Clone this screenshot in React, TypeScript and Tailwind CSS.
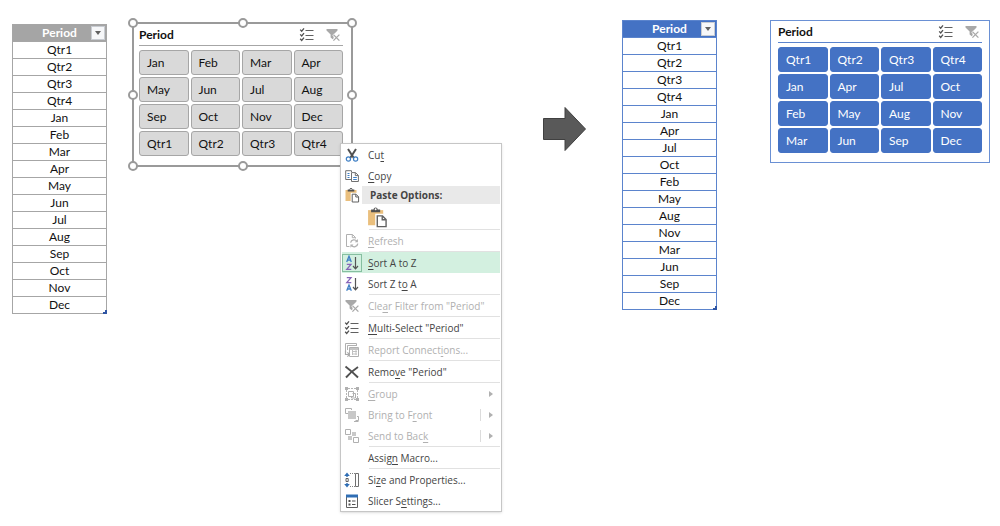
import React from 'react';
import clsx from 'clsx';

const tableBefore = ['Qtr1', 'Qtr2', 'Qtr3', 'Qtr4', 'Jan', 'Feb', 'Mar', 'Apr', 'May', 'Jun', 'Jul', 'Aug', 'Sep', 'Oct', 'Nov', 'Dec'];
const tableAfter = ['Qtr1', 'Qtr2', 'Qtr3', 'Qtr4', 'Jan', 'Apr', 'Jul', 'Oct', 'Feb', 'May', 'Aug', 'Nov', 'Mar', 'Jun', 'Sep', 'Dec'];
const slicerBefore = ['Jan', 'Feb', 'Mar', 'Apr', 'May', 'Jun', 'Jul', 'Aug', 'Sep', 'Oct', 'Nov', 'Dec', 'Qtr1', 'Qtr2', 'Qtr3', 'Qtr4'];
const slicerAfter = ['Qtr1', 'Qtr2', 'Qtr3', 'Qtr4', 'Jan', 'Apr', 'Jul', 'Oct', 'Feb', 'May', 'Aug', 'Nov', 'Mar', 'Jun', 'Sep', 'Dec'];

type Tone = 'gray' | 'blue';

function Svg({ children, className = 'size-4' }: { children: React.ReactNode; className?: string }) {
  return (
    <svg viewBox="0 0 16 16" fill="none" className={className} aria-hidden="true">
      {children}
    </svg>
  );
}

const CutIcon = () => (
  <Svg>
    <path d="M4 2L9.8 11M12 2L6.2 11" stroke="#505050" strokeWidth="2" />
    <circle cx="4.4" cy="12" r="2.1" stroke="#3f7fc4" strokeWidth="1.2" />
    <circle cx="11.6" cy="12" r="2.1" stroke="#3f7fc4" strokeWidth="1.2" />
  </Svg>
);

const CopyIcon = () => (
  <Svg>
    <path d="M7 11.5H1.7V2.7H7.5V4" stroke="#707070" />
    <path d="M3.5 5.5H5.5M3.5 7.5H5.5M3.5 9.5H5.5" stroke="#3f7fc4" />
    <path d="M7.5 4.6H11.5L14.4 7.4V13.5H7.5Z" fill="#fff" stroke="#707070" />
    <path d="M11.3 4.8V7.6H14.2" stroke="#707070" />
    <path d="M9.2 9.5H12.8M9.2 11.5H12.8" stroke="#3f7fc4" />
  </Svg>
);

const PasteIcon = ({ className }: { className?: string }) => (
  <Svg className={className}>
    <path d="M1.5 3H12.5V14H1.5Z" fill="#eabf7d" />
    <path d="M3.7 4.6V2.6H5.5C5.5 .5 8.5 .5 8.5 2.6H10.3V4.6Z" fill="#505050" />
    <circle cx="7" cy="2.4" r=".7" fill="#fff" />
    <path d="M7.8 6.8H12L14.9 9.6V15.2H7.8Z" fill="#fff" stroke="#fff" strokeWidth="2.2" />
    <path d="M8.2 7.2H12L14.6 9.8V15H8.2Z" fill="#fff" stroke="#606060" />
    <path d="M11.8 7.4V10H14.4" stroke="#606060" />
  </Svg>
);

const RefreshIcon = () => (
  <Svg>
    <path d="M5.5 13.5H2.5V1.5H8.5L11.5 4.5V5.5M8.3 1.7V4.7H11.3" stroke="#b0b0b0" />
    <path d="M6.6 9.6A3.6 3.6 0 0 1 13 8.3M13.8 10.6A3.6 3.6 0 0 1 7.4 12.4" stroke="#b0b0b0" strokeWidth="1.3" />
    <path d="M13.9 6V9.2H10.8ZM6.4 14.8V11.6H9.5Z" fill="#b0b0b0" />
  </Svg>
);

const SortAIcon = () => (
  <Svg>
    <path d="M2.7 7L5 1.2L7.3 7M3.5 5.2H6.5" stroke="#3f7fc4" strokeWidth="1.3" />
    <path d="M2.8 9.4H7L2.8 14.4H7.3" stroke="#8764b8" strokeWidth="1.3" />
    <path d="M11.5 2V13.5M9 11L11.5 13.8L14 11" stroke="#555" strokeWidth="1.2" />
  </Svg>
);

const SortZIcon = () => (
  <Svg>
    <path d="M2.8 1.6H7L2.8 6.6H7.3" stroke="#8764b8" strokeWidth="1.3" />
    <path d="M2.7 14.8L5 9L7.3 14.8M3.5 13H6.5" stroke="#3f7fc4" strokeWidth="1.3" />
    <path d="M11.5 2V13.5M9 11L11.5 13.8L14 11" stroke="#555" strokeWidth="1.2" />
  </Svg>
);

const ClearFilterIcon = () => (
  <Svg>
    <path d="M1.5 2H12.5V3.6L8.6 7.6V13L5.6 10.6V7.6L1.5 3.6Z" fill="#a8a8a8" />
    <path d="M8.2 7.4L14.5 13.7M14.5 7.4L8.2 13.7" stroke="#fff" strokeWidth="2.6" />
    <path d="M8.4 7.6L14.4 13.6M14.4 7.6L8.4 13.6" stroke="#a8a8a8" strokeWidth="1.3" />
  </Svg>
);

const MultiSelectIcon = () => (
  <Svg>
    <path d="M6.5 3.5H14.5M6.5 8.5H14.5M6.5 12.5H14.5" stroke="#606060" />
    <path d="M1.2 2.6L2.7 4.2L5 1.4M1.2 7.4L2.7 9L5 6.2M1.2 11.8L2.7 13.4L5 10.6" stroke="#505050" strokeWidth="1.3" />
  </Svg>
);

const ReportIcon = () => (
  <Svg>
    <path d="M1.5 10V1.5H12.5V4M3.5 8V3.5H12" stroke="#b0b0b0" />
    <path d="M5.5 5.5H14.5V14.5H5.5Z" fill="#fff" stroke="#b0b0b0" />
    <path d="M5.5 7H14.5" stroke="#b0b0b0" strokeWidth="1.5" />
    <path d="M8 9.5H13M8 12H13M8.5 8V13M12 8V13" stroke="#c0c0c0" />
    <path d="M1.5 8.5V12.5H5M3.4 10.4L5.5 12.5L3.4 14.6" stroke="#a8a8a8" strokeWidth="1.2" />
  </Svg>
);

const RemoveIcon = () => (
  <Svg>
    <path d="M1.5 2.5C6 6 10 9.5 14 13.5" stroke="#505050" strokeWidth="1.9" />
    <path d="M14 3C9.5 6 5.5 9.5 2 13.5" stroke="#505050" strokeWidth="1.9" />
  </Svg>
);

const GroupIcon = () => (
  <Svg>
    <path d="M4 2.5H12M4 13.5H12M2.5 4V12M13.5 4V12" stroke="#b4b4b4" strokeDasharray="2 1" />
    <path d="M1 1H4V4H1ZM12 1H15V4H12ZM1 12H4V15H1ZM12 12H15V15H12Z" fill="#b0b0b0" />
    <path d="M4.5 5.5H9.5V10.5H4.5ZM8.5 7.5H11.5V12H7.5V10.5" stroke="#b0b0b0" />
  </Svg>
);

const FrontIcon = () => (
  <Svg>
    <path d="M4 6.5H1.5V1.5H7.5V3M11.5 13.5H14.5V9.5H13M10 14.5H14.5" stroke="#b0b0b0" />
    <path d="M4 4H12V12H4Z" fill="#c8c8c8" />
  </Svg>
);

const BackIcon = () => (
  <Svg>
    <path d="M8 4H12V8H8ZM4 8H8V12H4Z" fill="#c8c8c8" />
    <path d="M1.5 1.5H6.5V6.5H1.5ZM9.5 9.5H14.5V14.5H9.5Z" fill="#fff" stroke="#b0b0b0" />
  </Svg>
);

const SizeIcon = () => (
  <Svg>
    <path d="M3 .5L5.8 4H.2ZM3 15.5L.2 12H5.8Z" fill="#2f6eb5" />
    <path d="M3 3V5M3 11V13" stroke="#2f6eb5" strokeWidth="1.4" />
    <path d="M2 6.5H4.2V9.5H2Z" stroke="#606060" />
    <path d="M6 1.5H11M6 14.5H11" stroke="#808080" strokeDasharray="1 1" />
    <path d="M11.5 1.5H14.5V14.5H11.5Z" stroke="#707070" />
  </Svg>
);

const SettingsIcon = () => (
  <Svg>
    <path d="M2.5 2.5H13.5V14.5H2.5Z" fill="#fff" stroke="#606060" />
    <path d="M2 1.5H14V4.5H2Z" fill="#2f6eb5" />
    <path d="M4.5 7H6.5V9H4.5ZM4.5 10.5H6.5V12.5H4.5Z" fill="#505050" />
    <path d="M8 8H11.5M8 11.5H11.5" stroke="#505050" />
  </Svg>
);

function PeriodTable({ rows, tone }: { rows: string[]; tone: Tone }) {
  const line = tone === 'gray' ? 'border-[#a6a6a6]' : 'border-[#5b84cd]';
  return (
    <div className="relative w-[95px] shrink-0">
      <table className={clsx('w-full table-fixed border-collapse border text-center text-xs leading-4 text-[#111]', line)}>
        <thead>
          <tr className="h-[17px]">
            <th className={clsx('relative p-0 font-bold text-white', tone === 'gray' ? 'bg-[#a5a5a5]' : 'bg-[#4472c4]')}>
              Period
              <button
                type="button"
                aria-label="Filter Period"
                className="absolute top-px right-px flex size-[14px] items-center justify-center border border-[#c8ccd2] bg-[#f6f7f9]"
              >
                <svg viewBox="0 0 6 4" className="h-1 w-1.5" aria-hidden="true">
                  <path d="M0 0H6L3 4Z" fill="#606060" />
                </svg>
              </button>
            </th>
          </tr>
        </thead>
        <tbody>
          {rows.map((row) => (
            <tr key={row} className="h-[17px]">
              <td className={clsx('border p-0', line)}>{row}</td>
            </tr>
          ))}
        </tbody>
      </table>
      <svg viewBox="0 0 4 4" className="absolute right-0 bottom-0 size-1" aria-hidden="true">
        <path d="M4 0V4H0V2H2V0Z" fill="#2f55a4" />
      </svg>
    </div>
  );
}

function Slicer({ items, tone }: { items: string[]; tone: Tone }) {
  return (
    <section
      className={clsx(
        'pb-[9px]',
        tone === 'gray' ? 'border-2 border-[#9a9a9a] pr-2 pl-[5px]' : 'border border-[#6a90d4] px-[7px]'
      )}
    >
      <header
        className={clsx(
          'mb-1 flex h-[22px] items-center border-b text-[#111]',
          tone === 'gray' ? 'border-[#a6a6a6]' : 'border-[#5b84cd]'
        )}
      >
        <h2 className="flex-1 text-xs leading-4 font-bold">Period</h2>
        <div className="flex gap-2.5 pr-0.5">
          <button type="button" aria-label="Multi-Select"><MultiSelectIcon /></button>
          <button type="button" aria-label="Clear Filter"><ClearFilterIcon /></button>
        </div>
      </header>
      <div className="grid grid-cols-4 gap-0.5">
        {items.map((item) => (
          <button
            key={item}
            type="button"
            className={clsx(
              'h-[25px] rounded-[3px] border pl-[7px] text-left text-xs leading-4',
              tone === 'gray' ? 'border-[#a6a6a6] bg-[#d9d9d9] text-[#111]' : 'border-[#4472c4] bg-[#4472c4] text-white'
            )}
          >
            {item}
          </button>
        ))}
      </div>
    </section>
  );
}

const handles = [
  'left-0 top-0', 'left-1/2 top-0', 'left-full top-0',
  'left-0 top-1/2', 'left-full top-1/2',
  'left-0 top-full', 'left-1/2 top-full', 'left-full top-full',
];

function SelectionHandles() {
  return (
    <div className="pointer-events-none absolute inset-px">
      {handles.map((place) => (
        <span
          key={place}
          className={clsx('absolute size-2.5 -translate-x-1/2 -translate-y-1/2 rounded-full border-2 border-[#9a9a9a] bg-white', place)}
        />
      ))}
    </div>
  );
}

// "&" marks the access key letter, which is underlined
function Mnemonic({ text }: { text: string }) {
  const at = text.indexOf('&');
  if (at < 0) return <>{text}</>;
  return (
    <>
      {text.slice(0, at)}
      <u className="underline-offset-2">{text[at + 1]}</u>
      {text.slice(at + 2)}
    </>
  );
}

interface ItemProps {
  label: string;
  icon?: React.ReactNode;
  disabled?: boolean;
  active?: boolean;
  arrow?: boolean;
  split?: boolean;
}

function MenuItem({ label, icon, disabled, active, arrow, split }: ItemProps) {
  return (
    <button
      type="button"
      role="menuitem"
      disabled={disabled}
      className={clsx(
        'flex h-[21px] w-full items-center text-left',
        active && 'bg-[#d3f0e0]',
        disabled ? 'text-[#b0b0b0]' : 'text-[#444]'
      )}
    >
      <span
        className={clsx(
          'mr-1.5 flex h-[18px] w-5 items-center justify-center border',
          active ? 'border-[#86bfa0]' : 'border-transparent'
        )}
      >
        {icon}
      </span>
      <span className="flex-1 whitespace-nowrap"><Mnemonic text={label} /></span>
      {split && <span className="mr-2 h-3 w-px bg-[#dcdcdc]" />}
      {arrow && (
        <svg viewBox="0 0 4 6" className="mr-[7px] h-1.5 w-1" aria-hidden="true">
          <path d="M0 0L4 3L0 6Z" fill="#b0b0b0" />
        </svg>
      )}
    </button>
  );
}

const Separator = () => <div role="separator" className="ml-[27px] h-px bg-[#e1e1e1]" />;

function ContextMenu() {
  return (
    <div
      role="menu"
      className="absolute top-[121px] left-[208px] w-[162px] border border-[#c6c6c6] bg-white px-px font-['Open_Sans',sans-serif] text-[10px] leading-4 shadow-sm"
    >
      <MenuItem label="Cu&t" icon={<CutIcon />} />
      <MenuItem label="&Copy" icon={<CopyIcon />} />
      <div className="flex h-[18px] items-center text-[#444]">
        <span className="flex w-5 justify-center"><PasteIcon className="size-4" /></span>
        <span className="flex h-full flex-1 items-center bg-[#e9e9e9] pl-2 font-bold">Paste Options:</span>
      </div>
      <div className="flex h-[25px] items-center pl-6">
        <button type="button" aria-label="Paste"><PasteIcon className="size-[22px]" /></button>
      </div>
      <Separator />
      <MenuItem label="&Refresh" icon={<RefreshIcon />} disabled />
      <Separator />
      <MenuItem label="&Sort A to Z" icon={<SortAIcon />} active />
      <MenuItem label="Sort Z t&o A" icon={<SortZIcon />} />
      <Separator />
      <MenuItem label={'Cle&ar Filter from "Period"'} icon={<ClearFilterIcon />} disabled />
      <Separator />
      <MenuItem label={'&Multi-Select "Period"'} icon={<MultiSelectIcon />} />
      <Separator />
      <MenuItem label="Report Connect&ions..." icon={<ReportIcon />} disabled />
      <Separator />
      <MenuItem label={'Remo&ve "Period"'} icon={<RemoveIcon />} />
      <Separator />
      <MenuItem label="&Group" icon={<GroupIcon />} disabled arrow />
      <MenuItem label="Bring to F&ront" icon={<FrontIcon />} disabled arrow split />
      <MenuItem label="Send to Bac&k" icon={<BackIcon />} disabled arrow split />
      <Separator />
      <MenuItem label="Assig&n Macro..." />
      <Separator />
      <MenuItem label="Si&ze and Properties..." icon={<SizeIcon />} />
      <MenuItem label="Slicer S&ettings..." icon={<SettingsIcon />} />
    </div>
  );
}

export default function App() {
  return (
    <main className="flex min-h-screen items-start bg-white px-3 pt-5 pr-2.5 font-['Lato',sans-serif]">
      <div className="flex flex-1 items-start gap-[25px]">
        <div className="pt-1"><PeriodTable rows={tableBefore} tone="gray" /></div>
        <div className="relative mt-0.5 w-[221px] shrink-0">
          <Slicer items={slicerBefore} tone="gray" />
          <SelectionHandles />
          <ContextMenu />
        </div>
      </div>
      <svg viewBox="0 0 43 44" className="mt-[87px] mr-9 h-11 w-[43px] shrink-0" aria-hidden="true">
        <path d="M0.5 11.5H22V0.5L42.5 22L22 43.5V32.5H0.5Z" fill="#595959" stroke="#404040" />
      </svg>
      <div className="flex items-start gap-[53px]">
        <PeriodTable rows={tableAfter} tone="blue" />
        <div className="w-[220px] shrink-0"><Slicer items={slicerAfter} tone="blue" /></div>
      </div>
    </main>
  );
}
